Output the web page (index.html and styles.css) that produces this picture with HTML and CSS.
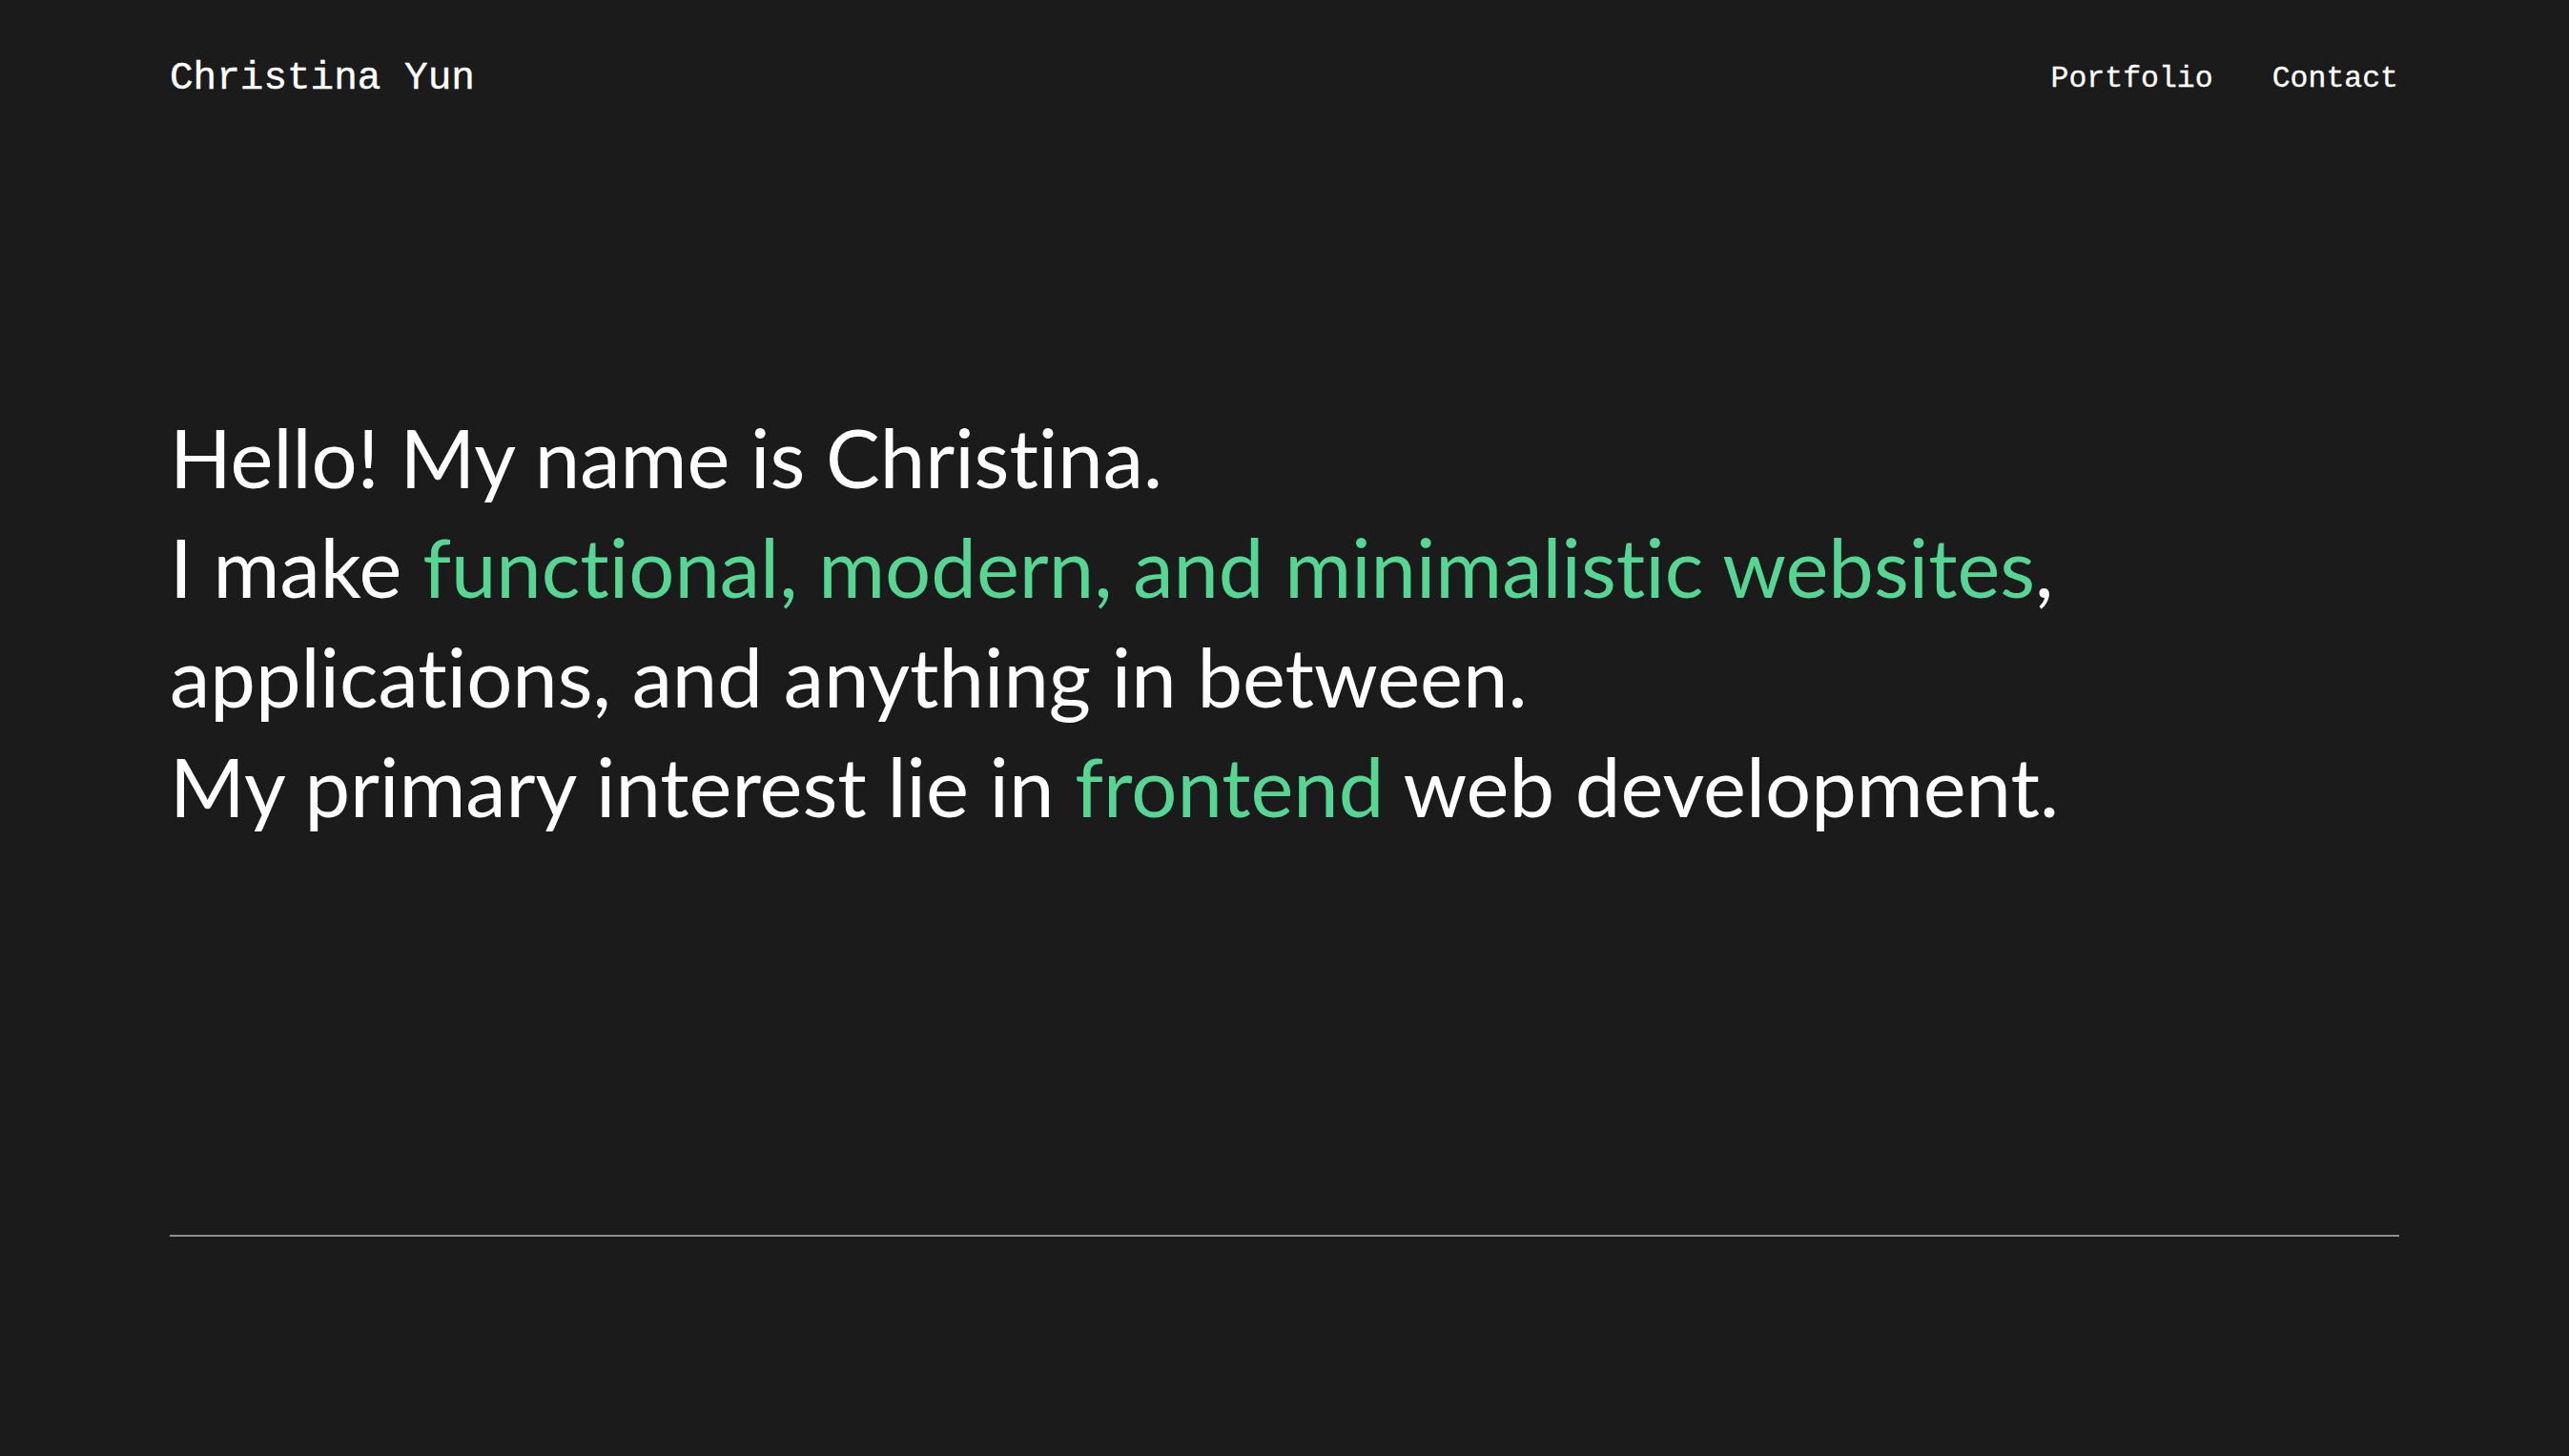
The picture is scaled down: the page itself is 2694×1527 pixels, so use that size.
FILE: index.html
```html
<!DOCTYPE html>
<html lang="en">
<head>
<meta charset="utf-8">
<title>Christina Yun</title>
<link rel="stylesheet" href="styles.css">
</head>
<body>
<div class="page">
  <header class="site-header">
    <a class="brand" href="#">Christina Yun</a>
    <nav class="nav">
      <a href="#">Portfolio</a>
      <a href="#">Contact</a>
    </nav>
  </header>
  <main class="hero">
    <p class="intro">Hello! My name is Christina.<br>I make <span class="accent">functional, modern, and minimalistic websites</span>,<br>applications, and anything in between.<br>My primary interest lie in <span class="accent">frontend</span> web development.</p>
  </main>
  <hr class="divider">
</div>
</body>
</html>
```

FILE: styles.css
```css
html, body {
  margin: 0;
  padding: 0;
  background: #1b1b1b;
  color: #ffffff;
}

.page {
  padding: 0 178px;
  min-height: 1527px;
  box-sizing: border-box;
}

.site-header {
  display: flex;
  justify-content: space-between;
  align-items: center;
  padding-top: 57px;
  height: 50px;
}

.brand {
  font-family: "Liberation Mono", "DejaVu Sans Mono", monospace;
  font-size: 41px;
  color: #ffffff;
  text-decoration: none;
  -webkit-text-stroke: 0.4px #ffffff;
}

.nav {
  display: flex;
  gap: 62px;
  margin-right: 1px;
}

.nav a {
  font-family: "Liberation Mono", "DejaVu Sans Mono", monospace;
  font-size: 31.5px;
  color: #ffffff;
  text-decoration: none;
  -webkit-text-stroke: 0.3px #ffffff;
}

.hero {
  padding-top: 315px;
}

.intro {
  margin: 0;
  font-family: Lato, "Open Sans", sans-serif;
  font-size: 85px;
  line-height: 115px;
  white-space: nowrap;
  font-variant-ligatures: none;
  color: #ffffff;
}

.accent {
  color: #55d693;
}

.divider {
  margin: 413px 0 0 0;
  border: 0;
  height: 2px;
  background: #8e8e8e;
}
```
